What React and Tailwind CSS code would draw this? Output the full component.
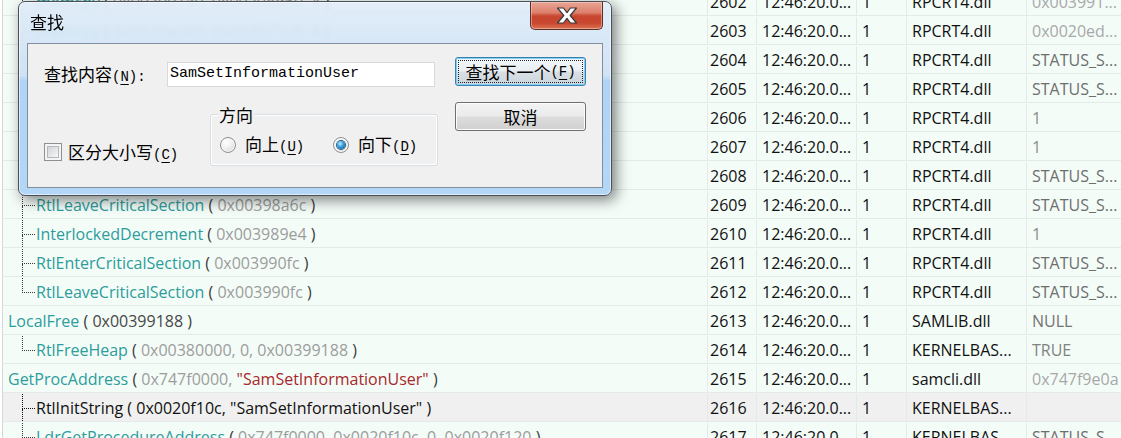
import React from 'react';

const cjk = "font-['Noto_Sans_CJK_SC',sans-serif]";
const mono = "font-['Liberation_Mono',monospace]";

const tone = {
  fn: 'text-[#2d9c9c]',
  p: 'text-[#3a3a3a]',
  a: 'text-[#9c9c9c]',
  d: 'text-[#474747]',
  s: 'text-[#a8282a]',
};

const resTone = {
  st: 'text-[#6e6e6e]',
  one: 'text-[#8c8c8c]',
  hex: 'text-[#a8a8a8]',
  null: 'text-[#727272]',
  true: 'text-[#828282]',
};

const call = (fn, args) => {
  const out = [['fn', fn], ['p', ' ( ']];
  args.forEach((a, i) => {
    out.push(a);
    if (i < args.length - 1) out.push(['a', ', ']);
  });
  out.push(['p', ' )']);
  return out;
};

const rows = [
  { n: 2602, mod: 'RPCRT4.dll', res: ['hex', '0x003991...'], lvl: 1, parts: call('memcpy', [['a', '0x003991a0'], ['a', '0x0020ed60'], ['a', '4']]) },
  { n: 2603, mod: 'RPCRT4.dll', res: ['hex', '0x0020ed...'], lvl: 1, parts: call('memcpy', [['a', '0x0020ed60'], ['a', '0x003975c8'], ['a', '4']]) },
  { n: 2604, mod: 'RPCRT4.dll', res: ['st', 'STATUS_S...'], lvl: 1, parts: call('RtlEnterCriticalSection', [['a', '0x003989e4']]) },
  { n: 2605, mod: 'RPCRT4.dll', res: ['st', 'STATUS_S...'], lvl: 1, parts: call('RtlLeaveCriticalSection', [['a', '0x003989e4']]) },
  { n: 2606, mod: 'RPCRT4.dll', res: ['one', '1'], lvl: 1, parts: call('InterlockedIncrement', [['a', '0x003989e4']]) },
  { n: 2607, mod: 'RPCRT4.dll', res: ['one', '1'], lvl: 1, parts: call('InterlockedDecrement', [['a', '0x003989e4']]) },
  { n: 2608, mod: 'RPCRT4.dll', res: ['st', 'STATUS_S...'], lvl: 1, parts: call('RtlEnterCriticalSection', [['a', '0x00398a6c']]) },
  { n: 2609, mod: 'RPCRT4.dll', res: ['st', 'STATUS_S...'], lvl: 1, parts: call('RtlLeaveCriticalSection', [['a', '0x00398a6c']]) },
  { n: 2610, mod: 'RPCRT4.dll', res: ['one', '1'], lvl: 1, parts: call('InterlockedDecrement', [['a', '0x003989e4']]) },
  { n: 2611, mod: 'RPCRT4.dll', res: ['st', 'STATUS_S...'], lvl: 1, parts: call('RtlEnterCriticalSection', [['a', '0x003990fc']]) },
  { n: 2612, mod: 'RPCRT4.dll', res: ['st', 'STATUS_S...'], lvl: 1, last: true, parts: call('RtlLeaveCriticalSection', [['a', '0x003990fc']]) },
  { n: 2613, mod: 'SAMLIB.dll', res: ['null', 'NULL'], lvl: 0, parts: call('LocalFree', [['d', '0x00399188']]) },
  { n: 2614, mod: 'KERNELBAS...', res: ['true', 'TRUE'], lvl: 1, last: true, parts: call('RtlFreeHeap', [['a', '0x00380000'], ['a', '0'], ['a', '0x00399188']]) },
  { n: 2615, mod: 'samcli.dll', res: ['hex', '0x747f9e0a'], lvl: 0, parts: call('GetProcAddress', [['a', '0x747f0000'], ['s', '"SamSetInformationUser"']]) },
  { n: 2616, mod: 'KERNELBAS...', res: null, lvl: 1, sel: true, parts: call('RtlInitString', [['a', '0x0020f10c'], ['s', '"SamSetInformationUser"']]) },
  { n: 2617, mod: 'KERNELBAS...', res: ['st', 'STATUS_S...'], lvl: 1, parts: call('LdrGetProcedureAddress', [['a', '0x747f0000'], ['a', '0x0020f10c'], ['a', '0'], ['a', '0x0020f120']]) },
];

function TreeLine({ last, sel }) {
  const c = sel ? 'border-[#111]' : 'border-[#3a3a3a]';
  return (
    <div className="ml-[19px] flex h-full w-[13px] shrink-0 flex-col">
      <div className={`h-[15px] border-b border-l border-dotted ${c}`} />
      <div className={`flex-1 ${last ? '' : `border-l border-dotted ${c}`}`} />
    </div>
  );
}

function Row({ r }) {
  return (
    <div className={`flex h-[29px] border-b border-[#e4eae7] pt-[1px] text-[16px] ${r.sel ? 'bg-[#f0f0f0]' : 'bg-[#f4fcf8]'}`}>
      <div className="flex h-full w-[704px] shrink-0 items-center whitespace-pre">
        {r.lvl === 1 ? <TreeLine last={r.last} sel={r.sel} /> : <div className="w-[5px]" />}
        <span className={r.lvl === 1 ? 'pl-[1px]' : ''}>
          {r.parts.map(([t, s], i) => (
            <span key={i} className={r.sel ? 'text-[#111]' : tone[t]}>{s}</span>
          ))}
        </span>
      </div>
      <div className="flex w-[49px] shrink-0 items-center border-l border-[#e4eae7] pl-[2px] text-[#111]">{r.n}</div>
      <div className="flex w-[100px] shrink-0 items-center border-l border-[#e4eae7] pl-[5px] text-[#111]">12:46:20.0...</div>
      <div className="flex w-[50px] shrink-0 items-center border-l border-[#e4eae7] pl-[5px] text-[#111]">1</div>
      <div className="flex w-[120px] shrink-0 items-center border-l border-[#e4eae7] pl-[5px] text-[#111]">{r.mod}</div>
      <div className="flex flex-1 items-center border-l border-[#e4eae7] pl-[5px]">
        {r.res && <span className={resTone[r.res[0]]}>{r.res[1]}</span>}
      </div>
    </div>
  );
}

function Acc({ k }) {
  return (
    <span className={`${mono} text-[14px]`}>
      (<span className="underline underline-offset-[3px]">{k}</span>)
    </span>
  );
}

function Radio({ on }) {
  return (
    <div className="flex h-[16px] w-[16px] shrink-0 items-center justify-center rounded-full border border-[#8e8f8f] bg-[radial-gradient(circle_at_35%_30%,#ffffff_0%,#f1f1f1_40%,#cfcfcf_100%)] shadow-[inset_0_0_0_1px_#fafafa]">
      {on && (
        <div className="h-[8px] w-[8px] rounded-full bg-[radial-gradient(circle_at_40%_35%,#c8f0ff_0%,#3ba7e2_40%,#0b4a80_100%)] shadow-[0_0_0_1px_#2a5f86]" />
      )}
    </div>
  );
}

function CloseGlyph() {
  return (
    <svg width="22" height="17" viewBox="0 0 22 17">
      <polygon
        points="1.5,1 7.5,1 11,5.6 14.5,1 20.5,1 14.2,8.5 20.5,16 14.5,16 11,11.4 7.5,16 1.5,16 7.8,8.5"
        fill="#ffffff"
        stroke="#3b3b3b"
        strokeWidth="1.2"
        strokeLinejoin="round"
      />
    </svg>
  );
}

function FindDialog() {
  const btn =
    'flex w-[131px] h-[29px] items-center justify-center rounded-[3px] border text-[17px] leading-none text-black';
  return (
    <div className="absolute left-[18px] top-[1px] flex h-[195px] w-[594px] flex-col rounded-[7px] border border-[#4a5059] bg-[linear-gradient(180deg,rgba(224,236,248,0.92)_0%,rgba(205,225,244,0.94)_38%,rgba(173,210,245,0.97)_41%,rgba(178,214,246,0.98)_100%)] px-[8px] pb-[7px] shadow-[inset_0_0_0_1px_rgba(255,255,255,0.55),4px_4px_14px_rgba(0,0,0,0.5)] backdrop-blur-[2px]">
      {/* title bar */}
      <div className="flex h-[41px] items-start justify-between">
        <span className={`${cjk} ml-[3px] mt-[10px] text-[17px] leading-[20px] text-black`}>查找</span>
        <div className="flex h-[28px] w-[73px] items-center justify-center rounded-b-[5px] border border-t-0 border-[#5a3129] bg-[linear-gradient(180deg,#e9a595_0%,#dc7f6b_40%,#c8452f_52%,#c84830_78%,#dd7252_100%)] shadow-[inset_0_0_0_1px_rgba(255,220,210,0.45)]">
          <CloseGlyph />
        </div>
      </div>

      {/* client area */}
      <div className={`${cjk} flex h-[145px] border border-[#808e9d] bg-[#f0f0f0] pl-[16px] pr-[16px] pt-[13px] text-[17px] text-black`}>
        <div className="flex flex-1 flex-col">
          <div className="mt-[5px] flex h-[25px] items-center">
            <div className="w-[123px] leading-none">
              查找内容<Acc k="N" /><span className={`${mono} text-[14px]`}>:</span>
            </div>
            <div className={`${mono} flex h-[25px] w-[268px] items-center border border-[#d6d9de] bg-white pl-[2px] text-[15px] text-black`}>
              SamSetInformationUser
            </div>
          </div>
          <div className="mt-[27px] flex">
            <div className="mt-[29px] flex h-[18px] w-[166px] items-center gap-[6px]">
              <div className="h-[18px] w-[18px] shrink-0 border border-[#8e8f8f] bg-[#f4f4f4] p-[2px]">
                <div className="h-full w-full border border-[#b4b8bd] bg-[linear-gradient(135deg,#cfd3d8_0%,#e8e9eb_60%,#f8f8f8_100%)]" />
              </div>
              <span className="leading-none whitespace-nowrap">区分大小写<Acc k="C" /></span>
            </div>
            <div className="relative h-[52px] w-[228px] rounded-[3px] border border-[#d5dfe5] shadow-[inset_0_0_0_1px_#ffffff]">
              <span className="absolute left-[7px] top-[-10px] bg-[#f0f0f0] px-[1px] leading-[20px]">方向</span>
              <div className="flex items-center pl-[9px] pt-[20px]">
                <div className="flex w-[113px] items-center gap-[9px]">
                  <Radio />
                  <span className="leading-none whitespace-nowrap">向上<Acc k="U" /></span>
                </div>
                <div className="flex items-center gap-[9px]">
                  <Radio on />
                  <span className="leading-none whitespace-nowrap">向下<Acc k="D" /></span>
                </div>
              </div>
            </div>
          </div>
        </div>
        <div className="flex w-[131px] flex-col gap-[16px]">
          <div className={`${btn} border-[#3c7fb1] bg-[linear-gradient(180deg,#f4f8fb_0%,#e9eef2_48%,#d8dfe5_52%,#cdd6dd_100%)] p-[2px] shadow-[inset_0_0_0_1px_#7fd0f5]`}>
            <div className="flex h-full w-full items-center justify-center border border-dotted border-[#222]">
              查找下一个<Acc k="F" />
            </div>
          </div>
          <div className={`${btn} border-[#707070] bg-[linear-gradient(180deg,#f3f3f3_0%,#ebebeb_48%,#dddddd_52%,#d0d0d0_100%)] shadow-[inset_0_0_0_1px_#fcfcfc]`}>
            取消
          </div>
        </div>
      </div>
    </div>
  );
}

export default function App() {
  return (
    <div className="relative h-[438px] w-[1121px] overflow-hidden bg-white font-['Open_Sans',sans-serif]">
      <div className="-mt-[13px] ml-[2px] border-l border-[#d3d9d6]">
        {rows.map((r) => (
          <Row key={r.n} r={r} />
        ))}
      </div>
      <FindDialog />
    </div>
  );
}
